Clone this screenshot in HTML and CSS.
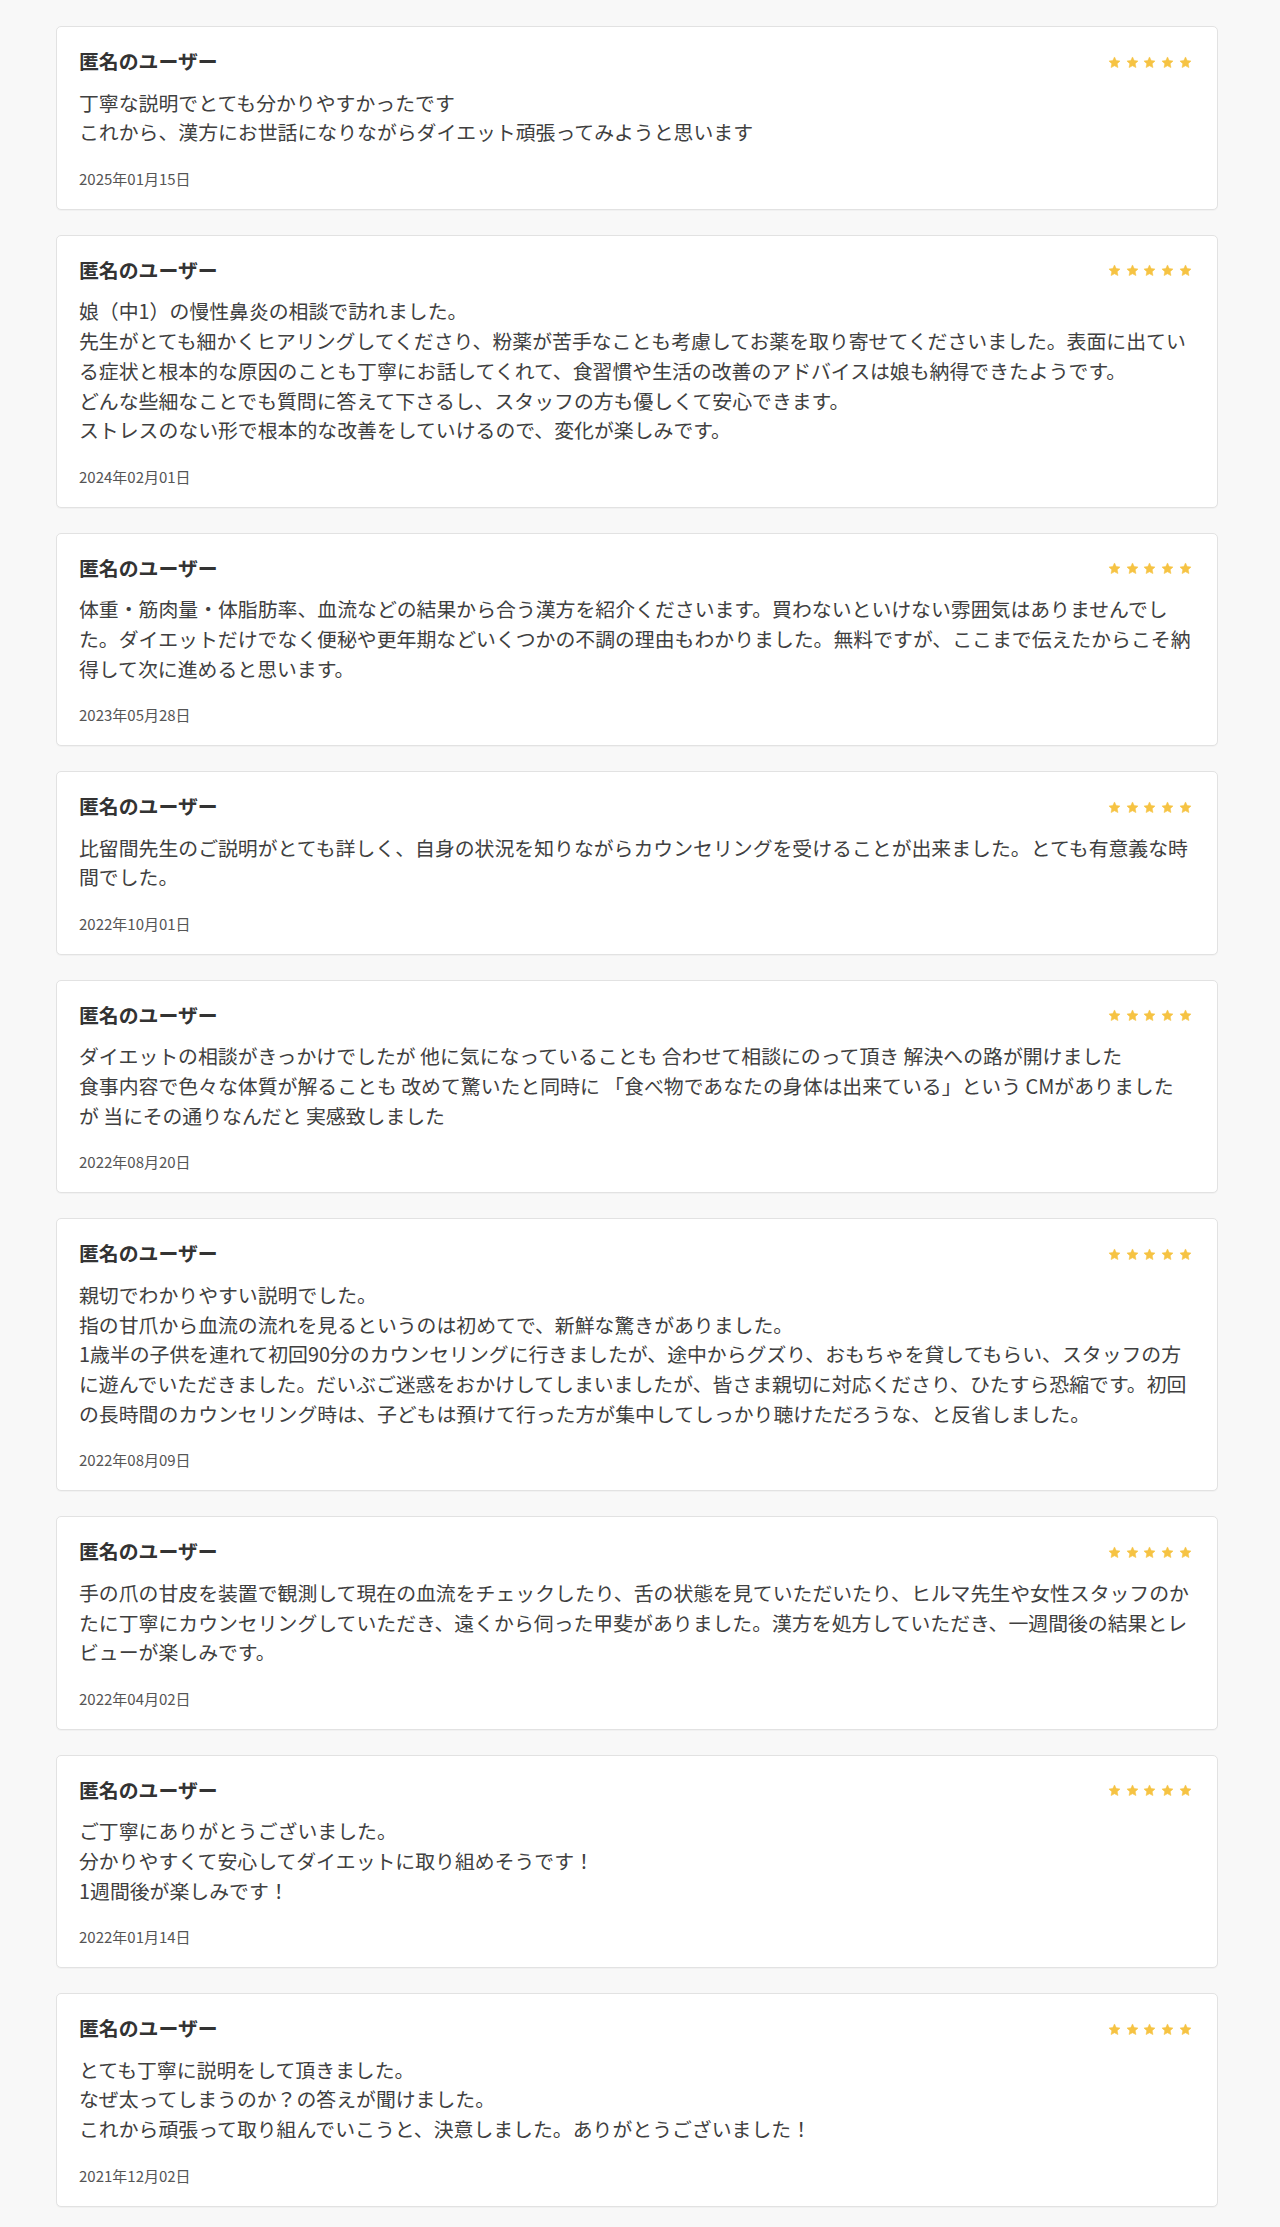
FILE: index.html
```html
<!DOCTYPE html>
<html lang="ja">
<head>
<meta charset="utf-8">
<title>レビュー</title>
<link rel="stylesheet" href="styles.css">
</head>
<body>
<svg width="0" height="0" class="defs" aria-hidden="true">
  <defs>
    <symbol id="star" viewBox="0 0 24 24">
      <path d="M12 1.8l3.1 6.6 7.1.9-5.2 5 1.3 7.1L12 18l-6.3 3.4 1.3-7.1-5.2-5 7.1-.9z" stroke-linejoin="round"/>
    </symbol>
  </defs>
</svg>
<main class="reviews">

  <article class="review">
    <header class="review-head">
      <h3 class="review-name">匿名のユーザー</h3>
      <div class="stars"><svg class="star"><use href="#star"/></svg><svg class="star"><use href="#star"/></svg><svg class="star"><use href="#star"/></svg><svg class="star"><use href="#star"/></svg><svg class="star"><use href="#star"/></svg></div>
    </header>
    <p class="review-body">丁寧な説明でとても分かりやすかったです<br>これから、漢方にお世話になりながらダイエット頑張ってみようと思います</p>
    <p class="review-date">2025年01月15日</p>
  </article>

  <article class="review">
    <header class="review-head">
      <h3 class="review-name">匿名のユーザー</h3>
      <div class="stars"><svg class="star"><use href="#star"/></svg><svg class="star"><use href="#star"/></svg><svg class="star"><use href="#star"/></svg><svg class="star"><use href="#star"/></svg><svg class="star"><use href="#star"/></svg></div>
    </header>
    <p class="review-body">娘（中1）の慢性鼻炎の相談で訪れました。<br>先生がとても細かくヒアリングしてくださり、粉薬が苦手なことも考慮してお薬を取り寄せてくださいました。表面に出ている症状と根本的な原因のことも丁寧にお話してくれて、食習慣や生活の改善のアドバイスは娘も納得できたようです。<br>どんな些細なことでも質問に答えて下さるし、スタッフの方も優しくて安心できます。<br>ストレスのない形で根本的な改善をしていけるので、変化が楽しみです。</p>
    <p class="review-date">2024年02月01日</p>
  </article>

  <article class="review">
    <header class="review-head">
      <h3 class="review-name">匿名のユーザー</h3>
      <div class="stars"><svg class="star"><use href="#star"/></svg><svg class="star"><use href="#star"/></svg><svg class="star"><use href="#star"/></svg><svg class="star"><use href="#star"/></svg><svg class="star"><use href="#star"/></svg></div>
    </header>
    <p class="review-body">体重・筋肉量・体脂肪率、血流などの結果から合う漢方を紹介くださいます。買わないといけない雰囲気はありませんでした。ダイエットだけでなく便秘や更年期などいくつかの不調の理由もわかりました。無料ですが、ここまで伝えたからこそ納得して次に進めると思います。</p>
    <p class="review-date">2023年05月28日</p>
  </article>

  <article class="review">
    <header class="review-head">
      <h3 class="review-name">匿名のユーザー</h3>
      <div class="stars"><svg class="star"><use href="#star"/></svg><svg class="star"><use href="#star"/></svg><svg class="star"><use href="#star"/></svg><svg class="star"><use href="#star"/></svg><svg class="star"><use href="#star"/></svg></div>
    </header>
    <p class="review-body">比留間先生のご説明がとても詳しく、自身の状況を知りながらカウンセリングを受けることが出来ました。とても有意義な時間でした。</p>
    <p class="review-date">2022年10月01日</p>
  </article>

  <article class="review">
    <header class="review-head">
      <h3 class="review-name">匿名のユーザー</h3>
      <div class="stars"><svg class="star"><use href="#star"/></svg><svg class="star"><use href="#star"/></svg><svg class="star"><use href="#star"/></svg><svg class="star"><use href="#star"/></svg><svg class="star"><use href="#star"/></svg></div>
    </header>
    <p class="review-body">ダイエットの相談がきっかけでしたが 他に気になっていることも 合わせて相談にのって頂き 解決への路が開けました<br>食事内容で色々な体質が解ることも 改めて驚いたと同時に 「食べ物であなたの身体は出来ている」という CMがありました<br>が 当にその通りなんだと 実感致しました</p>
    <p class="review-date">2022年08月20日</p>
  </article>

  <article class="review">
    <header class="review-head">
      <h3 class="review-name">匿名のユーザー</h3>
      <div class="stars"><svg class="star"><use href="#star"/></svg><svg class="star"><use href="#star"/></svg><svg class="star"><use href="#star"/></svg><svg class="star"><use href="#star"/></svg><svg class="star"><use href="#star"/></svg></div>
    </header>
    <p class="review-body">親切でわかりやすい説明でした。<br>指の甘爪から血流の流れを見るというのは初めてで、新鮮な驚きがありました。<br>1歳半の子供を連れて初回90分のカウンセリングに行きましたが、途中からグズり、おもちゃを貸してもらい、スタッフの方に遊んでいただきました。だいぶご迷惑をおかけしてしまいましたが、皆さま親切に対応くださり、ひたすら恐縮です。初回の長時間のカウンセリング時は、子どもは預けて行った方が集中してしっかり聴けただろうな、と反省しました。</p>
    <p class="review-date">2022年08月09日</p>
  </article>

  <article class="review">
    <header class="review-head">
      <h3 class="review-name">匿名のユーザー</h3>
      <div class="stars"><svg class="star"><use href="#star"/></svg><svg class="star"><use href="#star"/></svg><svg class="star"><use href="#star"/></svg><svg class="star"><use href="#star"/></svg><svg class="star"><use href="#star"/></svg></div>
    </header>
    <p class="review-body">手の爪の甘皮を装置で観測して現在の血流をチェックしたり、舌の状態を見ていただいたり、ヒルマ先生や女性スタッフのかたに丁寧にカウンセリングしていただき、遠くから伺った甲斐がありました。漢方を処方していただき、一週間後の結果とレビューが楽しみです。</p>
    <p class="review-date">2022年04月02日</p>
  </article>

  <article class="review">
    <header class="review-head">
      <h3 class="review-name">匿名のユーザー</h3>
      <div class="stars"><svg class="star"><use href="#star"/></svg><svg class="star"><use href="#star"/></svg><svg class="star"><use href="#star"/></svg><svg class="star"><use href="#star"/></svg><svg class="star"><use href="#star"/></svg></div>
    </header>
    <p class="review-body">ご丁寧にありがとうございました。<br>分かりやすくて安心してダイエットに取り組めそうです！<br>1週間後が楽しみです！</p>
    <p class="review-date">2022年01月14日</p>
  </article>

  <article class="review">
    <header class="review-head">
      <h3 class="review-name">匿名のユーザー</h3>
      <div class="stars"><svg class="star"><use href="#star"/></svg><svg class="star"><use href="#star"/></svg><svg class="star"><use href="#star"/></svg><svg class="star"><use href="#star"/></svg><svg class="star"><use href="#star"/></svg></div>
    </header>
    <p class="review-body">とても丁寧に説明をして頂きました。<br>なぜ太ってしまうのか？の答えが聞けました。<br>これから頑張って取り組んでいこうと、決意しました。ありがとうございました！</p>
    <p class="review-date">2021年12月02日</p>
  </article>

</main>
</body>
</html>
```

FILE: styles.css
```css
html, body {
  margin: 0;
  padding: 0;
}

body {
  background: #f8f8f8;
  font-family: "Noto Sans CJK JP", "Noto Sans", sans-serif;
  color: #3d3d3d;
}

.defs {
  position: absolute;
  width: 0;
  height: 0;
  overflow: hidden;
}

.reviews {
  width: 1162px;
  margin-left: 56px;
  padding: 26px 0 20px;
  display: flex;
  flex-direction: column;
  gap: 25px;
}

.review {
  background: #ffffff;
  border: 1px solid #e2e2e2;
  border-radius: 5px;
  padding: 22px;
  box-shadow: 0 1px 1px rgba(0, 0, 0, 0.03);
}

.review-head {
  display: flex;
  justify-content: space-between;
  align-items: center;
  height: 23px;
  margin-bottom: 15.5px;
}

.review-name {
  margin: 0;
  font-size: 19.88px;
  line-height: 23px;
  font-weight: 700;
  color: #333333;
}

.stars {
  display: flex;
  gap: 4.8px;
  padding-right: 3px;
  margin-top: 3px;
}

.star {
  width: 13px;
  height: 13px;
  fill: #f6c343;
  stroke: #f6c343;
  stroke-width: 1;
}

.review-body {
  margin: 0;
  font-size: 19.88px;
  line-height: 29.82px;
  color: #404040;
  text-spacing-trim: space-all;
}

.review-date {
  margin: 22.5px 0 0;
  font-size: 15px;
  line-height: 17px;
  color: #555555;
}
```
